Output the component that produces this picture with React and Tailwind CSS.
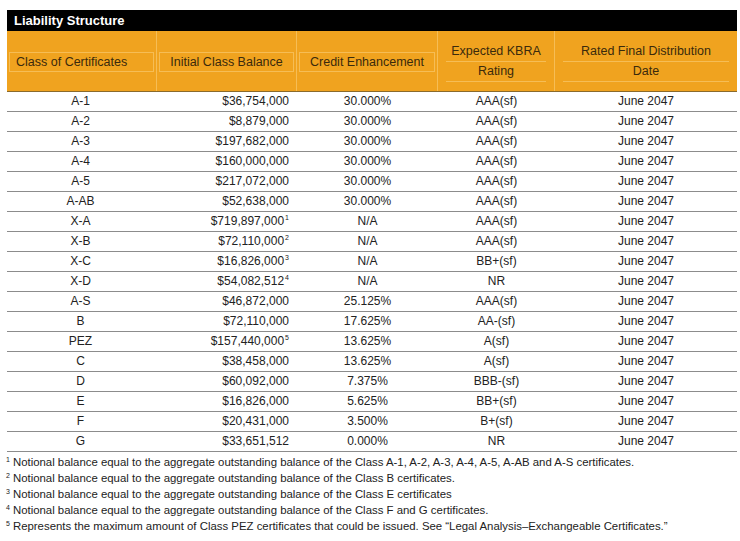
const rows = [
  ["A-1", "$36,754,000", null, "30.000%", "AAA(sf)"],
  ["A-2", "$8,879,000", null, "30.000%", "AAA(sf)"],
  ["A-3", "$197,682,000", null, "30.000%", "AAA(sf)"],
  ["A-4", "$160,000,000", null, "30.000%", "AAA(sf)"],
  ["A-5", "$217,072,000", null, "30.000%", "AAA(sf)"],
  ["A-AB", "$52,638,000", null, "30.000%", "AAA(sf)"],
  ["X-A", "$719,897,000", "1", "N/A", "AAA(sf)"],
  ["X-B", "$72,110,000", "2", "N/A", "AAA(sf)"],
  ["X-C", "$16,826,000", "3", "N/A", "BB+(sf)"],
  ["X-D", "$54,082,512", "4", "N/A", "NR"],
  ["A-S", "$46,872,000", null, "25.125%", "AAA(sf)"],
  ["B", "$72,110,000", null, "17.625%", "AA-(sf)"],
  ["PEZ", "$157,440,000", "5", "13.625%", "A(sf)"],
  ["C", "$38,458,000", null, "13.625%", "A(sf)"],
  ["D", "$60,092,000", null, "7.375%", "BBB-(sf)"],
  ["E", "$16,826,000", null, "5.625%", "BB+(sf)"],
  ["F", "$20,431,000", null, "3.500%", "B+(sf)"],
  ["G", "$33,651,512", null, "0.000%", "NR"],
];

const notes = [
  ["1", "Notional balance equal to the aggregate outstanding balance of the Class A-1, A-2, A-3, A-4, A-5, A-AB and A-S certificates."],
  ["2", "Notional balance equal to the aggregate outstanding balance of the Class B certificates."],
  ["3", "Notional balance equal to the aggregate outstanding balance of the Class E certificates"],
  ["4", "Notional balance equal to the aggregate outstanding balance of the Class F and G certificates."],
  ["5", "Represents the maximum amount of Class PEZ certificates that could be issued. See \u201cLegal Analysis\u2013Exchangeable Certificates.\u201d"],
];

const cols = "grid grid-cols-[150px_140px_141px_117px_182px]";

function HeadOne({ text, left }) {
  return (
    <div className="h-[60px] border-r border-[#f6bd55] px-[2px] pt-[21px]">
      <div
        className={
          "h-[20px] border border-[#f6bd55] flex items-center " +
          (left ? "justify-start pl-[6px]" : "justify-center")
        }
      >
        {text}
      </div>
    </div>
  );
}

function HeadTwo({ top, bottom, last }) {
  return (
    <div className={"h-[60px] px-[8px] pt-[11px] " + (last ? "" : "border-r border-[#f6bd55]")}>
      <div className="h-[20px] flex items-center justify-center border-b border-[#f6bd55]">{top}</div>
      <div className="h-[20px] flex items-center justify-center border-b border-[#f6bd55]">{bottom}</div>
    </div>
  );
}

export default function App() {
  return (
    <div
      className="w-[740px] h-[541px] bg-white pl-[7px] pt-[10px] text-[#222]"
      style={{ fontFamily: '"Liberation Sans", Arial, sans-serif' }}
    >
      <div className="w-[730px]">
        <div className="h-[21px] bg-black text-white font-bold text-[13px] leading-[21px] pl-[7px]">
          Liability Structure
        </div>
        <div className={cols + " bg-[#f0a31f] text-[#3a2a0c] text-[12.5px] border-b border-[#8a6a2c]"}>
          <HeadOne text="Class of Certificates" left />
          <HeadOne text="Initial Class Balance" />
          <HeadOne text="Credit Enhancement" />
          <HeadTwo top="Expected KBRA" bottom="Rating" />
          <HeadTwo top="Rated Final Distribution" bottom="Date" last />
        </div>
        {rows.map(([cls, bal, sup, ce, rating]) => (
          <div key={cls} className={cols + " h-[20px] text-[12px] leading-[19px] border-b border-[#8c8c8c]"}>
            <div className="text-center pr-[3px]">{cls}</div>
            <div className="text-right pr-[8px]">
              {bal}
              {sup && <span className="text-[7px] ml-[1px] align-top leading-[12px]">{sup}</span>}
            </div>
            <div className="text-center">{ce}</div>
            <div className="text-center">{rating}</div>
            <div className="text-center">June 2047</div>
          </div>
        ))}
      </div>
      <div className="pt-[2px] text-[11.4px] leading-[16px] -ml-[1px]">
        {notes.map(([n, t]) => (
          <div key={n}>
            <span className="text-[7px] mr-[3px] align-top leading-[11px]">{n}</span>
            {t}
          </div>
        ))}
      </div>
    </div>
  );
}
